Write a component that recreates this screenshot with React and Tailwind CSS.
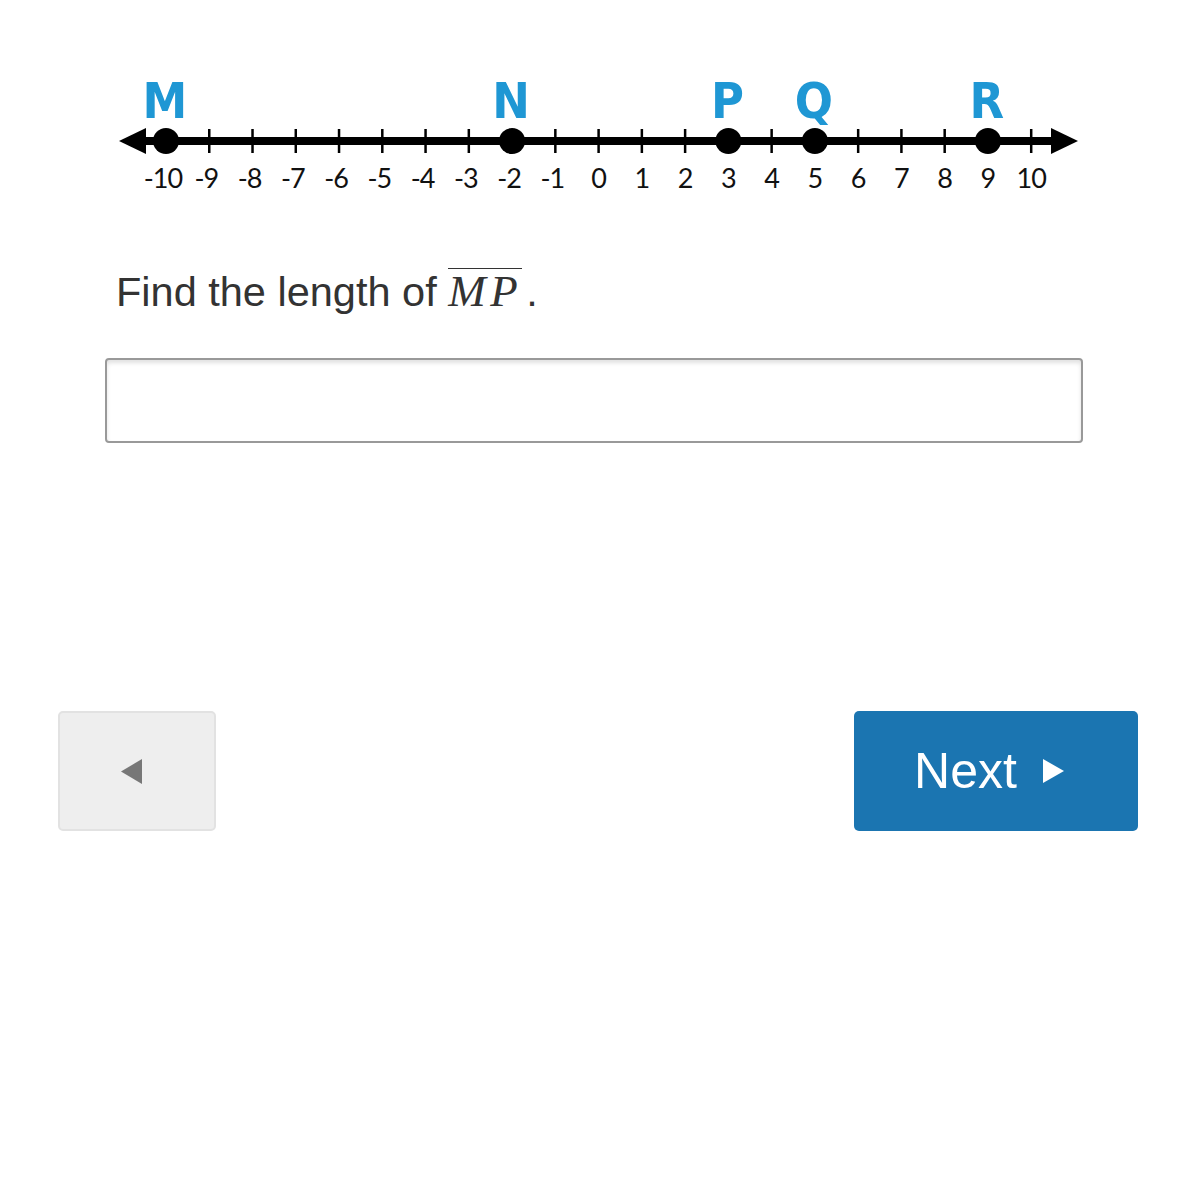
const NUMS = Array.from({ length: 21 }, (_, i) => i - 10);
const X0 = 166;
const STEP = 43.26;
const xAt = (n) => X0 + (n + 10) * STEP;

const POINTS = [
  { label: 'M', value: -10 },
  { label: 'N', value: -2 },
  { label: 'P', value: 3 },
  { label: 'Q', value: 5 },
  { label: 'R', value: 9 },
];

const NumberLine = () => (
  <svg width="1198" height="200" viewBox="0 0 1198 200" className="block">
    {/* main line */}
    <line x1="130" y1="141" x2="1062" y2="141" stroke="#000" strokeWidth="8" />
    <polygon points="119,141 146,128 146,154" fill="#000" />
    <polygon points="1078,141 1051,128 1051,154" fill="#000" />

    {/* ticks */}
    {NUMS.map((n) => (
      <line key={n} x1={xAt(n)} y1="129" x2={xAt(n)} y2="153" stroke="#000" strokeWidth="2.5" />
    ))}

    {/* numbers */}
    {NUMS.map((n) => (
      <text
        key={n}
        x={xAt(n) - (n < 0 ? 3 : 0)}
        y="188"
        textAnchor="middle"
        fontFamily="Lato, 'Open Sans', sans-serif"
        fontSize="27"
        letterSpacing="-1"
        fill="#111"
      >
        {n}
      </text>
    ))}

    {/* points */}
    {POINTS.map((p) => (
      <g key={p.label}>
        <circle cx={xAt(p.value)} cy="141" r="13" fill="#000" />
        <text
          x={xAt(p.value) - 1}
          y="118"
          textAnchor="middle"
          fontFamily="'DejaVu Sans Condensed', 'DejaVu Sans', sans-serif"
          fontWeight="600"
          fontSize="50"
          fill="#1f97d4"
        >
          {p.label}
        </text>
      </g>
    ))}
  </svg>
);

export default function App() {
  return (
    <div className="w-[1198px] h-[1200px] bg-white" style={{ fontFamily: "'Liberation Sans', Arial, sans-serif" }}>
      <NumberLine />

      <p className="mt-[68px] ml-[116px] text-[41.5px] leading-[48px] text-[#333]">
        Find the length of{' '}
        <span
          className="inline-block border-t-[1.5px] border-[#333] leading-none italic text-[45px] tracking-[0.1em]"
          style={{ fontFamily: "'Liberation Serif', 'Times New Roman', serif" }}
        >
          MP
        </span>
        <span className="ml-[4px]">.</span>
      </p>

      <div className="mt-[42px] ml-[105px] w-[978px] h-[85px] rounded-[4px] border-2 border-[#999] bg-white shadow-[inset_0_3px_4px_rgba(0,0,0,0.12)]" />

      <div className="mt-[268px] flex justify-between pl-[58px] pr-[60px]">
        <button className="w-[158px] h-[120px] rounded-[5px] border-2 border-[#e2e2e2] bg-[#eeeeee] flex items-center justify-center">
          <svg width="22" height="25" viewBox="0 0 22 25" className="-ml-[10px]">
            <polygon points="0,12.5 21,0 21,25" fill="#777" />
          </svg>
        </button>
        <button className="w-[284px] h-[120px] rounded-[5px] bg-[#1b75b1] flex items-center justify-center gap-[26px] text-white text-[50px] pr-[14px]">
          <span>Next</span>
          <svg width="21" height="24" viewBox="0 0 21 24">
            <polygon points="0,0 21,12 0,24" fill="#fff" />
          </svg>
        </button>
      </div>
    </div>
  );
}
